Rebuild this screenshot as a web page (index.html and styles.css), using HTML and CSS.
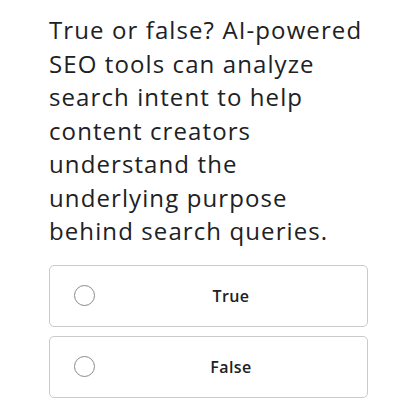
FILE: index.html
```html
<!DOCTYPE html>
<html lang="en">
<head>
    <meta charset="UTF-8">
    <meta name="viewport" content="width=device-width, initial-scale=1.0">
    <title>Quiz</title>
    <link rel="stylesheet" href="styles.css">
</head>
<body>

    <div class="quiz">
        <h1 class="question">True or false? AI-powered SEO tools can analyze search intent to help content creators understand the underlying purpose behind search queries.</h1>

        <div class="answers">
            <label class="answer">
                <span class="radio"></span>
                <span class="answer-text">True</span>
            </label>
            <label class="answer">
                <span class="radio"></span>
                <span class="answer-text">False</span>
            </label>
        </div>
    </div>

</body>
</html>
```

FILE: styles.css
```css
body {
    font-family: 'Open Sans', sans-serif;
    margin: 0;
    padding: 0;
    background-color: #fff;
    color: #202124;
}
.quiz {
    width: 319px;
    padding: 13px 0 0 49px;
}
.question {
    font-size: 24px;
    font-weight: 400;
    line-height: 33.5px;
    letter-spacing: 1.1px;
    margin: 0 0 17px 0;
}
.answers {
    display: flex;
    flex-direction: column;
    gap: 9px;
}
.answer {
    display: flex;
    align-items: center;
    height: 60px;
    border: 1px solid #cacaca;
    border-radius: 5px;
    cursor: pointer;
}
.radio {
    width: 19px;
    height: 19px;
    border: 1px solid #8a8a8a;
    border-radius: 50%;
    margin-left: 24px;
    flex-shrink: 0;
}
.answer-text {
    flex: 1;
    text-align: center;
    font-size: 16px;
    font-weight: 600;
    letter-spacing: 0.4px;
}
```
